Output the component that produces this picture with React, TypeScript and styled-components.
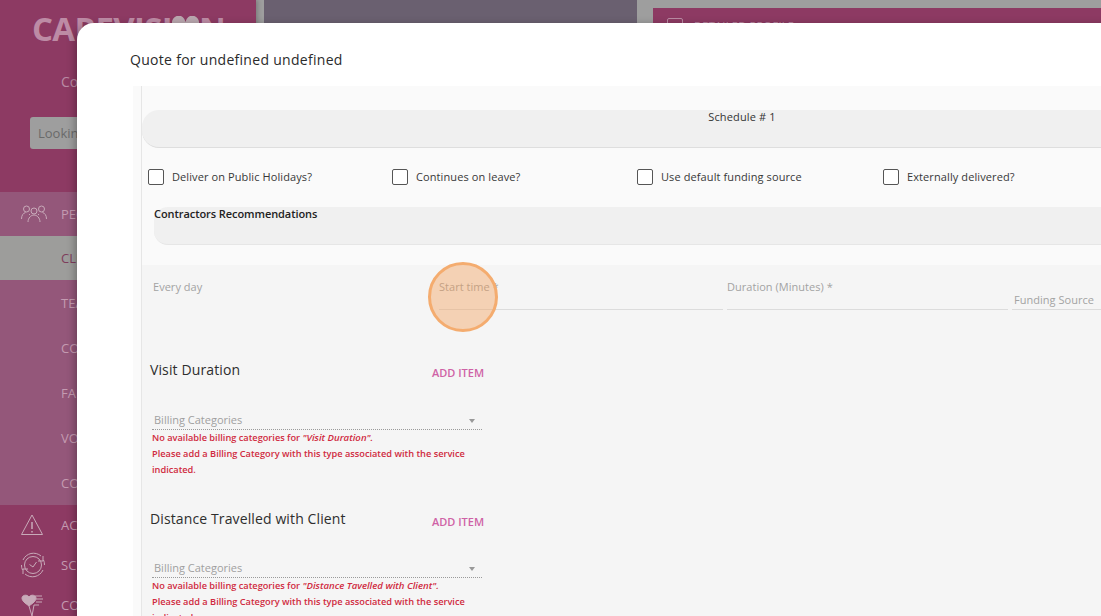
import React from "react";
import styled, { createGlobalStyle } from "styled-components";

const Global = createGlobalStyle`
  html, body { margin: 0; padding: 0; height: 100%; overflow: hidden; background: #9e9e9e; }
  * { box-sizing: border-box; }
  body { font-family: "Open Sans", "Noto Sans", sans-serif; }
`;

const Page = styled.div`
  position: relative; width: 1101px; height: 616px; overflow: hidden;
  display: flex; background: #9e9e9e;
`;
const Sidebar = styled.aside`
  width: 256px; height: 616px; flex: none; background: #8d3a63; overflow: hidden;
  display: flex; flex-direction: column; box-shadow: 2px 0 4px rgba(0,0,0,.2);
`;
const Logo = styled.div`
  height: 56px; flex: none; padding: 6px 0 0 32px; display: flex; align-items: flex-start; align-self: flex-start;
  font: 700 33px/46px "Open Sans", sans-serif; letter-spacing: -.7px; color: #bd8ba5; white-space: nowrap;
`;
const HeartMark = styled.svg`
  flex: none; margin: 10px 0 0 0;
`;
const Subtitle = styled.div`
  height: 61px; flex: none; padding: 16px 0 0 61px; font-size: 14px; line-height: 20px; color: #b98ba3;
`;
const SearchWrap = styled.div`
  height: 75px; flex: none; padding-left: 30px;
`;
const Search = styled.div`
  width: 200px; height: 32px; border-radius: 3px; background: #9e9e9e; color: #6a6a6a;
  font-size: 13px; line-height: 32px; padding-left: 8px;
`;
const Group = styled.div`
  background: #94577a; height: 313px; flex: none; display: flex; flex-direction: column;
`;
const NavRow = styled.div<{ $active?: boolean; $h?: number }>`
  height: ${p => p.$h ?? 45}px; flex: none; display: flex; align-items: center;
  padding-left: 61px; position: relative;
  font-size: 13px; color: ${p => (p.$active ? "#7f3d5d" : "#c49bb1")};
  background: ${p => (p.$active ? "#9d9d9b" : "transparent")};
`;
const NavIcon = styled.svg`
  position: absolute; left: 20px; top: 50%; transform: translateY(-50%);
  fill: none; stroke: #c8aab9; stroke-width: 1;
`;
const Behind = styled.div`
  flex: none; margin-left: 8px; width: 373px; height: 616px; background: #6a6070;
`;
const ProfileBar = styled.div`
  margin: 8px 0 0 16px; flex: 1; height: 120px; background: #8d3a63;
  display: flex; align-items: flex-start; padding: 10px 0 0 14px; gap: 11px;
  color: #b98ba3; font-size: 11px; line-height: 16px; letter-spacing: .3px;
`;
const ProfileBox = styled.span`
  width: 16px; height: 16px; flex: none; border: 1px solid #b98ba3; border-radius: 2px;
`;

const Modal = styled.div`
  position: absolute; left: 77px; top: 23px; width: 1300px; height: 700px;
  background: #fff; border-radius: 17px 0 0 0;
  box-shadow: -2px 2px 8px rgba(0,0,0,.3);
  padding: 26px 0 0 53px; display: flex; flex-direction: column;
`;
const Title = styled.h2`
  margin: 0; height: 37px; font-weight: 400; font-size: 14px; line-height: 22px;
  letter-spacing: .29px; color: #2b2b2b;
`;
const Scroll = styled.div`
  margin-left: 3px; flex: 1; background: #fafafa; padding-left: 8px;
`;
const Inner = styled.div`
  border-left: 1px solid #e6e6e6; height: 100%; padding-top: 24px; display: flex; flex-direction: column;
`;
const ScheduleBar = styled.div`
  height: 38px; width: 1200px; flex: none; background: #f0f0f0; border-radius: 17px 0 0 17px;
  border-bottom: 1px solid #dedede; text-align: center;
  font-size: 11px; line-height: 14px; color: #333; letter-spacing: .15px;
`;
const Checks = styled.div`
  display: grid; grid-template-columns: 244px 245px 246px 200px; padding: 21px 0 0 6px; height: 59px; flex: none;
`;
const Check = styled.label`
  display: flex; align-items: flex-start; gap: 8px; height: 16px;
  font-size: 11px; line-height: 16px; color: #383838; letter-spacing: .1px; white-space: nowrap;
`;
const Box = styled.span`
  width: 16px; height: 16px; flex: none; border: 1px solid #555; border-radius: 2px; background: #fff;
`;
const RecBar = styled.div`
  margin-left: 12px; width: 1100px; height: 38px; flex: none; background: #f0f0f0;
  border-radius: 14px 0 0 14px; border-bottom: 1px solid #e6e6e6;
  font-size: 11px; font-weight: 600; line-height: 14px; letter-spacing: -.07px; color: #222;
`;
const Lower = styled.div`
  margin-top: 20px; flex: 1; background: #f5f5f5; padding-top: 14px;
`;
const Fields = styled.div`
  display: grid; grid-template-columns: 286px 288px 285px 200px; padding-left: 11px; height: 31px;
`;
const Field = styled.div<{ $line?: boolean; $low?: boolean }>`
  font-size: 11px; color: #a3a3a3; letter-spacing: .03px; white-space: nowrap;
  line-height: 16px; padding: ${p => (p.$low ? "13px 0 0 2px" : "0")}; margin-right: 4px;
  height: 31px; border-bottom: ${p => (p.$line ? "1px solid #dcdcdc" : "none")};
`;
const ItemHead = styled.div`
  display: flex; width: 342px; padding-left: 8px; align-items: center; justify-content: space-between;
`;
const ItemTitle = styled.div`
  font-size: 14px; line-height: 20px; color: #2e2e2e; letter-spacing: .12px;
`;
const AddItem = styled.div`
  font-size: 11px; font-weight: 600; line-height: 14px; margin-top: 6px; color: #cf62a6; width: 52px; white-space: nowrap;
`;
const Section = styled.section<{ $top: number }>`
  padding-top: ${p => p.$top}px; height: ${p => p.$top + 149}px;
`;
const Select = styled.div<{ $gap: number }>`
  margin: ${p => p.$gap}px 0 0 10px; width: 330px; height: 18px; border-bottom: 1px dotted #9a9a9a;
  display: flex; justify-content: space-between; padding: 0 7px 0 2px;
  font-size: 11px; line-height: 16px; color: #a0a0a0;
`;
const Caret = styled.span`
  margin-top: 7px; width: 0; height: 0; border: 3.5px solid transparent; border-top: 4px solid #999; border-bottom: 0;
`;
const Errors = styled.div`
  margin: 0 0 0 10px; width: 330px;
  font-size: 9.22px; font-weight: 600; line-height: 16px; color: #d02a40;
  em { font-style: italic; font-size: 9.6px; }
`;
const Spot = styled.div`
  position: absolute; left: 428px; top: 262px; width: 70px; height: 70px; border-radius: 50%;
  background: rgba(243,160,90,.42); border: 3px solid #f4ac6f;
`;

const Item = ({ title, note, top, gap }: { title: string; note: string; top: number; gap: number }) => (
  <Section $top={top}>
    <ItemHead>
      <ItemTitle>{title}</ItemTitle>
      <AddItem>ADD ITEM</AddItem>
    </ItemHead>
    <Select $gap={gap}>
      Billing Categories
      <Caret />
    </Select>
    <Errors>
      No available billing categories for <em>"{note}".</em>
      <br />
      Please add a Billing Category with this type associated with the service indicated.
    </Errors>
  </Section>
);

export default function App() {
  return (
    <Page>
      <Global />
      <Sidebar>
        <Logo>
          CAREVISI
          <HeartMark width="27" height="14" viewBox="0 0 27 14">
            <path d="M0 8a6.5 7 0 0 1 13.5-2A6.5 7 0 0 1 27 8v6H0z" fill="#b9a7ae" />
          </HeartMark>
          N
        </Logo>
        <Subtitle>Co</Subtitle>
        <SearchWrap><Search>Looking for</Search></SearchWrap>
        <Group>
          <NavRow $h={44}>
            PEOPLE
            <NavIcon width="28" height="18" viewBox="0 0 28 18">
              <circle cx="6.5" cy="4" r="3" />
              <circle cx="14" cy="6" r="3" />
              <circle cx="21.5" cy="4" r="3" />
              <path d="M1.5 14c0-4 2-6 4-6.5M26.5 14c0-4-2-6-4-6.5M8 17c0-4 3-7 6-7s6 3 6 7M9 9l1 1M19 9l-1 1" />
            </NavIcon>
          </NavRow>
          <NavRow $active $h={44}>CLIENTS</NavRow>
          <NavRow>TEAM</NavRow>
          <NavRow>CONTRACTORS</NavRow>
          <NavRow>FAMILY</NavRow>
          <NavRow>VOLUNTEERS</NavRow>
          <NavRow>CONTACTS</NavRow>
        </Group>
        <NavRow $h={40}>
          ACTIONS
          <NavIcon width="24" height="22" viewBox="0 0 24 22">
            <path d="M12 1 1.5 20.5h21z" strokeLinejoin="round" />
            <path d="M12 8v7M12 17v1.5" strokeWidth="1.5" />
          </NavIcon>
        </NavRow>
        <NavRow $h={40}>
          SCHEDULE
          <NavIcon width="26" height="26" viewBox="0 0 26 26">
            <path d="M3 8a11.5 11.5 0 0 1 18-4M23 18a11.5 11.5 0 0 1-18 4M24.5 13a11.5 11.5 0 0 0-1-5M1.5 13a11.5 11.5 0 0 0 1 5" />
            <path d="M23 4v5h-5M3 22v-5h5" />
            <circle cx="13" cy="13" r="8.5" />
            <path d="M9.5 12.5 13 15l3.5-5" />
          </NavIcon>
        </NavRow>
        <NavRow $h={40}>
          COMMUNITY
          <NavIcon width="24" height="24" viewBox="0 0 24 24">
            <path d="M9 13C5 10 2 8 2 5c0-3 5-4 7-1 2-3 7-2 7 1 0 3-3 5-7 8z" fill="#c8aab9" />
            <path d="M15 3h7M16 6h7M16 9h6M14 12h5M9 13l3 10M12 23l2-11" />
          </NavIcon>
        </NavRow>
      </Sidebar>
      <Behind />
      <ProfileBar><ProfileBox />DETAILED PROFILE</ProfileBar>
      <Modal>
        <Title>Quote for undefined undefined</Title>
        <Scroll>
          <Inner>
            <ScheduleBar>Schedule # 1</ScheduleBar>
            <Checks>
              <Check><Box />Deliver on Public Holidays?</Check>
              <Check><Box />Continues on leave?</Check>
              <Check><Box />Use default funding source</Check>
              <Check><Box />Externally delivered?</Check>
            </Checks>
            <RecBar>Contractors Recommendations</RecBar>
            <Lower>
              <Fields>
                <Field>Every day</Field>
                <Field $line>Start time *</Field>
                <Field $line>Duration (Minutes) *</Field>
                <Field $line $low>Funding Source</Field>
              </Fields>
              <Item title="Visit Duration" note="Visit Duration" top={50} gap={32} />
              <Item title="Distance Travelled with Client" note="Distance Tavelled with Client" top={0} gap={31} />
            </Lower>
          </Inner>
        </Scroll>
      </Modal>
      <Spot />
    </Page>
  );
}
